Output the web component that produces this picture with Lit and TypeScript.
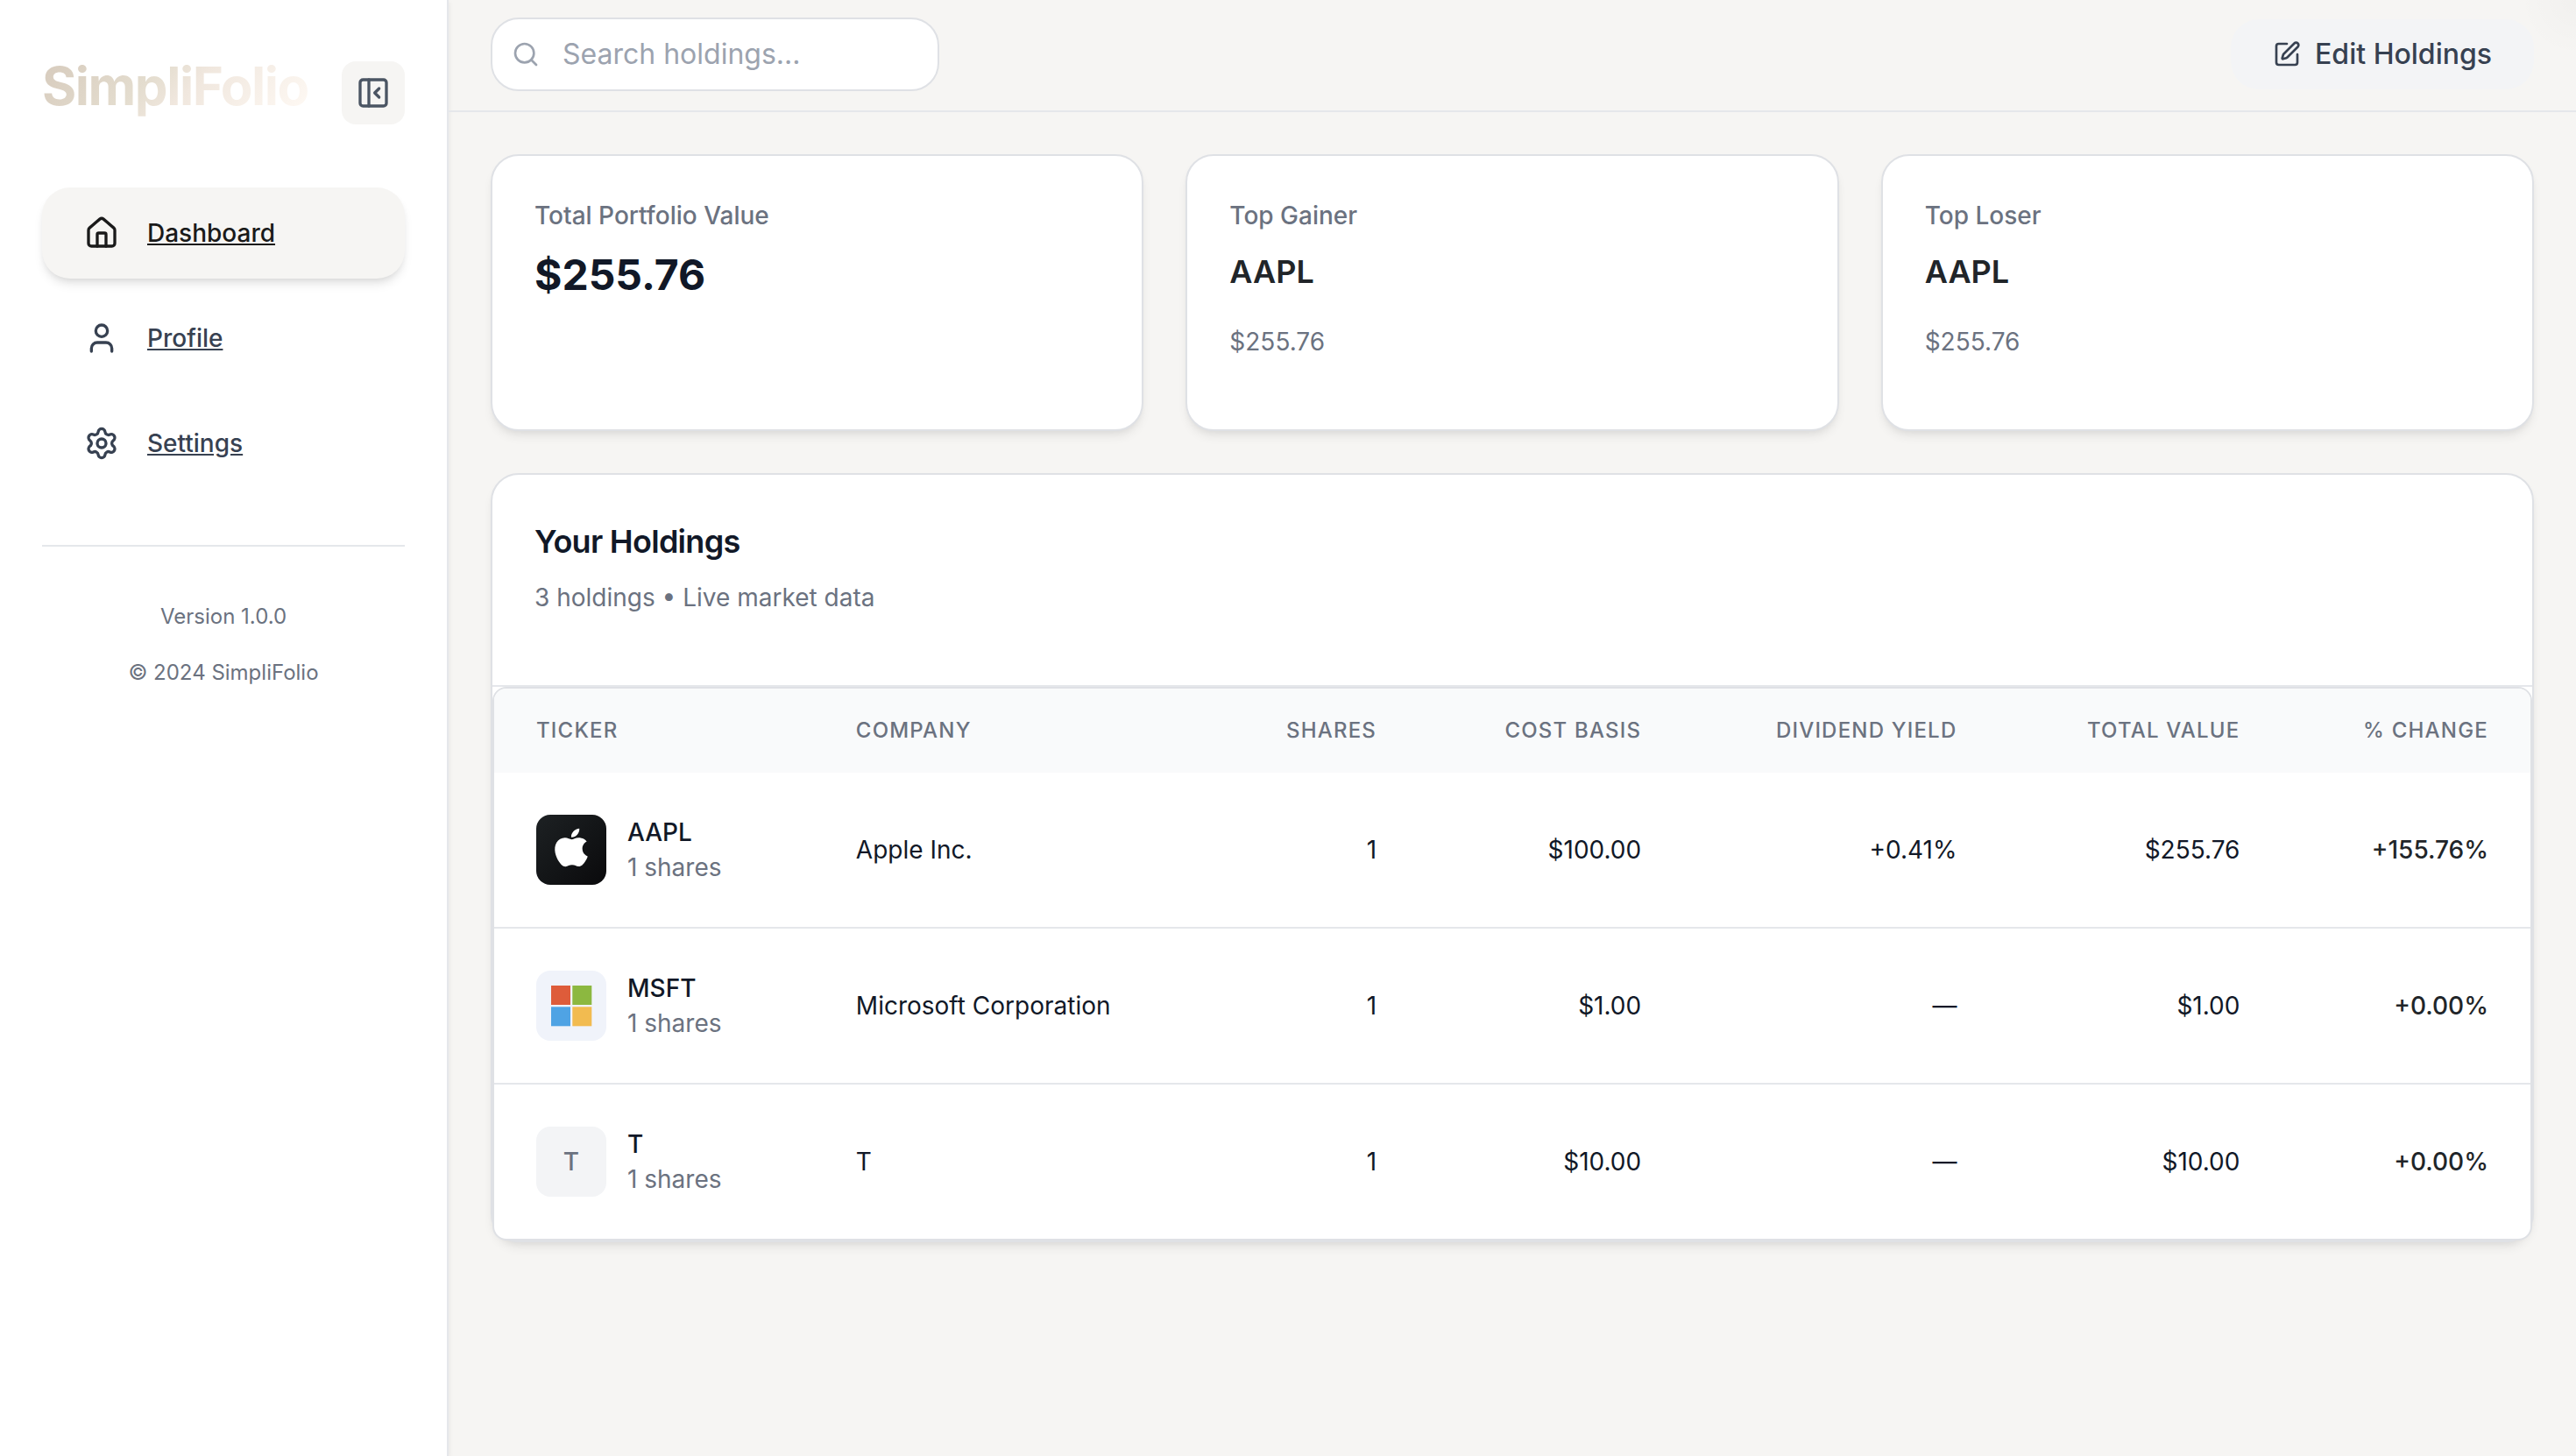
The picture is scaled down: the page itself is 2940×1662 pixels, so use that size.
import { LitElement, html, css, svg, type SVGTemplateResult } from "lit";
import { customElement, state } from "lit/decorators.js";

interface Holding {
  ticker: string;
  company: string;
  shares: number;
  cost: string;
  dividend: string;
  total: string;
  change: string;
}

const HOLDINGS: Holding[] = [
  { ticker: "AAPL", company: "Apple Inc.", shares: 1, cost: "$100.00", dividend: "+0.41%", total: "$255.76", change: "+155.76%" },
  { ticker: "MSFT", company: "Microsoft Corporation", shares: 1, cost: "$1.00", dividend: "—", total: "$1.00", change: "+0.00%" },
  { ticker: "T", company: "T", shares: 1, cost: "$10.00", dividend: "—", total: "$10.00", change: "+0.00%" },
];

const ICONS: Record<string, SVGTemplateResult> = {
  house: svg`<path d="M15 21v-8a1 1 0 0 0-1-1h-4a1 1 0 0 0-1 1v8"/><path d="M3 10a2 2 0 0 1 .709-1.528l7-5.999a2 2 0 0 1 2.582 0l7 5.999A2 2 0 0 1 21 10v9a2 2 0 0 1-2 2H5a2 2 0 0 1-2-2z"/>`,
  user: svg`<path d="M19 21v-2a4 4 0 0 0-4-4H9a4 4 0 0 0-4 4v2"/><circle cx="12" cy="7" r="4"/>`,
  gear: svg`<path d="M9.671 4.136a2.34 2.34 0 0 1 4.659 0 2.34 2.34 0 0 0 3.319 1.915 2.34 2.34 0 0 1 2.33 4.033 2.34 2.34 0 0 0 0 3.831 2.34 2.34 0 0 1-2.33 4.033 2.34 2.34 0 0 0-3.319 1.915 2.34 2.34 0 0 1-4.659 0 2.34 2.34 0 0 0-3.32-1.915 2.34 2.34 0 0 1-2.33-4.033 2.34 2.34 0 0 0 0-3.831A2.34 2.34 0 0 1 6.35 6.051a2.34 2.34 0 0 0 3.319-1.915"/><circle cx="12" cy="12" r="3"/>`,
  panel: svg`<rect width="18" height="18" x="3" y="3" rx="2"/><path d="M9 3v18"/><path d="m16 15-3-3 3-3"/>`,
  search: svg`<circle cx="11" cy="11" r="8"/><path d="m21 21-4.3-4.3"/>`,
  pen: svg`<path d="M12 3H5a2 2 0 0 0-2 2v14a2 2 0 0 0 2 2h14a2 2 0 0 0 2-2v-7"/><path d="M18.375 2.625a1 1 0 0 1 3 3l-9.013 9.014a2 2 0 0 1-.853.505l-2.873.84a.5.5 0 0 1-.62-.62l.84-2.873a2 2 0 0 1 .506-.852z"/>`,
};

const icon = (name: string, size = "") => html`
  <svg class="icon ${size}" viewBox="0 0 24 24" aria-hidden="true">${ICONS[name]}</svg>
`;

const appleTile = html`
  <svg class="tile" viewBox="0 0 80 80" aria-hidden="true">
    <defs>
      <linearGradient id="apple-bg" x1="0" y1="0" x2="1" y2="1">
        <stop offset="0" stop-color="#1d2123" />
        <stop offset="1" stop-color="#0a0a0c" />
      </linearGradient>
    </defs>
    <rect width="80" height="80" fill="url(#apple-bg)" />
    <g transform="translate(17 15.7) scale(1.92 1.81)" fill="#fff">
      <path d="M12.152 6.896c-.948 0-2.415-1.078-3.96-1.04-2.04.027-3.91 1.183-4.961 3.014-2.117 3.675-.546 9.103 1.519 12.09 1.013 1.454 2.208 3.09 3.792 3.039 1.52-.065 2.09-.987 3.935-.987 1.831 0 2.35.987 3.96.948 1.637-.026 2.676-1.48 3.676-2.948 1.156-1.688 1.636-3.325 1.662-3.415-.039-.013-3.182-1.221-3.22-4.857-.026-3.04 2.48-4.494 2.597-4.559-1.429-2.09-3.623-2.324-4.39-2.376-2-.156-3.675 1.09-4.61 1.09zM15.53 3.83c.843-1.012 1.4-2.427 1.245-3.83-1.207.052-2.662.805-3.532 1.818-.78.896-1.454 2.338-1.273 3.714 1.338.104 2.715-.688 3.559-1.701" />
    </g>
  </svg>
`;

const microsoftTile = html`
  <svg class="tile" viewBox="0 0 80 80" aria-hidden="true">
    <rect width="80" height="80" fill="#f0f3fa" />
    <rect x="17" y="17" width="22" height="22" fill="#de5c3a" />
    <rect x="41.3" y="17" width="22" height="22" fill="#8cb840" />
    <rect x="17" y="41.3" width="22" height="22" fill="#4fa3e4" />
    <rect x="41.3" y="41.3" width="22" height="22" fill="#f2bb50" />
  </svg>
`;

const tileFor = (ticker: string) =>
  ticker === "AAPL" ? appleTile
  : ticker === "MSFT" ? microsoftTile
  : html`<span class="tile letter" aria-hidden="true">${ticker[0]}</span>`;

@customElement("app-root")
export class AppRoot extends LitElement {
  @state() private query = "";

  static styles = css`
    :host {
      display: block;
      font-family: Inter, "Liberation Sans", sans-serif;
      font-size: 28px;
      line-height: 40px;
      color: #111827;
    }
    *, *::before, *::after { box-sizing: border-box; }
    h1, h2, h3, p { margin: 0; font: inherit; }
    button, input { font: inherit; color: inherit; }

    .shell {
      display: grid;
      grid-template-columns: 512px minmax(0, 1fr);
      min-height: 100vh;
      background: #f6f5f3;
    }
    .icon {
      flex: none;
      width: 40px;
      height: 40px;
      fill: none;
      stroke: currentColor;
      stroke-width: 2;
      stroke-linecap: round;
      stroke-linejoin: round;
    }
    .icon.small { width: 32px; height: 32px; }

    .sidebar {
      padding: 62px 48px;
      background: #fff;
      border-right: 2px solid #e5e7eb;
      box-shadow: 0 2px 6px rgba(0, 0, 0, 0.08);
    }
    .brand {
      display: flex;
      align-items: center;
      justify-content: space-between;
      margin-bottom: 64px;
    }
    .logo {
      margin-bottom: 16px;
      font-size: 60px;
      line-height: 72px;
      font-weight: 700;
      letter-spacing: -0.025em;
      color: transparent;
      background: linear-gradient(135deg, #d6cabc 0%, #e4ddcf 40%, #f0e7de 55%, #fffaf5 100%);
      -webkit-background-clip: text;
      background-clip: text;
    }
    .collapse {
      display: grid;
      place-items: center;
      width: 72px;
      height: 72px;
      padding: 0;
      border: 0;
      border-radius: 16px;
      background: #f6f5f3;
      color: #4b5563;
    }
    .nav {
      display: flex;
      flex-direction: column;
      gap: 16px;
      padding-bottom: 64px;
      border-bottom: 2px solid #e5e7eb;
    }
    .nav-link {
      display: flex;
      align-items: center;
      gap: 32px;
      padding: 32px 48px;
      border-radius: 32px;
      font-weight: 500;
      color: #374151;
      text-decoration: underline;
    }
    .nav-link.active {
      color: #1a1a1a;
      background: #f6f5f3;
      box-shadow: 0 8px 12px -2px rgba(0, 0, 0, 0.1), 0 4px 8px -4px rgba(0, 0, 0, 0.1);
    }
    .about {
      display: flex;
      flex-direction: column;
      gap: 32px;
      padding-top: 64px;
      font-size: 24px;
      line-height: 32px;
      text-align: center;
      color: #6b7280;
    }

    .topbar {
      display: flex;
      align-items: center;
      justify-content: space-between;
      padding: 20px 48px 22px;
      border-bottom: 2px solid #e5e7eb;
      background: radial-gradient(circle 64px at 100% 0, rgba(0, 0, 0, 0.02), transparent);
      font-size: 32px;
    }
    .search {
      display: flex;
      align-items: center;
      gap: 26px;
      width: 512px;
      height: 84px;
      padding: 0 22px;
      border: 2px solid #dfe1e5;
      border-radius: 32px;
      background: #fff;
      color: #9ca3af;
    }
    .search input {
      flex: 1;
      min-width: 0;
      padding: 0;
      border: 0;
      outline: 0;
      background: none;
      color: #111827;
    }
    .search input::placeholder { color: #9ca3af; opacity: 1; }
    .edit {
      display: flex;
      align-items: center;
      gap: 16px;
      height: 80px;
      padding: 0 48px;
      border: 0;
      border-radius: 32px;
      background: #f3f4f6;
      color: #374151;
      font-weight: 500;
    }

    .content {
      display: flex;
      flex-direction: column;
      gap: 48px;
      padding: 48px;
    }
    .cards {
      display: grid;
      grid-template-columns: repeat(3, minmax(0, 1fr));
      gap: 48px;
    }
    .card {
      background: #fff;
      border: 2px solid #dfe1e5;
      border-radius: 32px;
      box-shadow: 0 8px 12px -2px rgba(0, 0, 0, 0.07), 0 4px 8px -4px rgba(0, 0, 0, 0.07);
    }
    .stat { padding: 48px 48px 80px; }
    .stat-label {
      margin-bottom: 16px;
      font-weight: 500;
      color: #6b7280;
    }
    .stat-value {
      font-size: 48px;
      line-height: 64px;
      font-weight: 700;
    }
    .stat-name {
      margin-bottom: 32px;
      font-size: 36px;
      line-height: 56px;
      font-weight: 600;
      color: #212529;
    }
    .muted { color: #6b7280; }

    .holdings-head {
      padding: 48px 48px 80px;
      border-bottom: 2px solid #e5e7eb;
    }
    .holdings-title {
      margin-bottom: 16px;
      font-size: 36px;
      line-height: 56px;
      font-weight: 600;
      letter-spacing: -0.02em;
    }
    .table-wrap {
      overflow: hidden;
      border: 2px solid #dfe1e5;
      border-radius: 16px;
      background: #fff;
    }
    table {
      width: 100%;
      table-layout: fixed;
      border-collapse: separate;
      border-spacing: 0;
    }
    .col-ticker { width: 15.7%; }
    .col-company { width: 19.5%; }
    .col-shares { width: 10.2%; }
    .col-cost { width: 13%; }
    .col-dividend { width: 15.5%; }
    .col-total { width: 13.9%; }
    .col-change { width: 12.2%; }
    th, td {
      padding: 48px;
      text-align: left;
      white-space: nowrap;
    }
    th {
      padding: 32px 48px;
      background: #f9fafb;
      font-size: 24px;
      line-height: 32px;
      font-weight: 500;
      letter-spacing: 0.05em;
      text-transform: uppercase;
      color: #6b7280;
    }
    .num { text-align: right; }
    tbody tr + tr td { border-top: 2px solid #e5e7eb; }
    .security {
      display: flex;
      align-items: center;
      gap: 24px;
    }
    .symbol { font-weight: 500; }
    .change { font-weight: 500; color: #212529; }
    .tile {
      flex: none;
      width: 80px;
      height: 80px;
      border-radius: 16px;
      overflow: hidden;
    }
    .letter {
      display: grid;
      place-items: center;
      background: #f3f4f6;
      font-weight: 500;
      color: #6b7280;
    }
  `;

  private onSearch(e: Event) {
    this.query = (e.target as HTMLInputElement).value;
  }

  private get visible() {
    const q = this.query.trim().toLowerCase();
    return HOLDINGS.filter((h) => `${h.ticker} ${h.company}`.toLowerCase().includes(q));
  }

  render() {
    return html`
      <div class="shell">
        <aside class="sidebar">
          <div class="brand">
            <h1 class="logo">SimpliFolio</h1>
            <button class="collapse" type="button" aria-label="Collapse sidebar">${icon("panel")}</button>
          </div>
          <nav class="nav">
            <a class="nav-link active" href="#dashboard">${icon("house")}<span>Dashboard</span></a>
            <a class="nav-link" href="#profile">${icon("user")}<span>Profile</span></a>
            <a class="nav-link" href="#settings">${icon("gear")}<span>Settings</span></a>
          </nav>
          <div class="about">
            <p>Version 1.0.0</p>
            <p>© 2024 SimpliFolio</p>
          </div>
        </aside>

        <div class="main">
          <header class="topbar">
            <label class="search">
              ${icon("search", "small")}
              <input type="text" placeholder="Search holdings..." aria-label="Search holdings" .value=${this.query} @input=${this.onSearch} />
            </label>
            <button class="edit" type="button">${icon("pen", "small")}<span>Edit Holdings</span></button>
          </header>

          <main class="content">
            <section class="cards">
              <article class="card stat">
                <h3 class="stat-label">Total Portfolio Value</h3>
                <p class="stat-value">$255.76</p>
              </article>
              <article class="card stat">
                <h3 class="stat-label">Top Gainer</h3>
                <p class="stat-name">AAPL</p>
                <p class="muted">$255.76</p>
              </article>
              <article class="card stat">
                <h3 class="stat-label">Top Loser</h3>
                <p class="stat-name">AAPL</p>
                <p class="muted">$255.76</p>
              </article>
            </section>

            <section class="card">
              <div class="holdings-head">
                <h2 class="holdings-title">Your Holdings</h2>
                <p class="muted">${HOLDINGS.length} holdings • Live market data</p>
              </div>
              <div class="table-wrap">
                <table>
                  <colgroup>
                    <col class="col-ticker" />
                    <col class="col-company" />
                    <col class="col-shares" />
                    <col class="col-cost" />
                    <col class="col-dividend" />
                    <col class="col-total" />
                    <col class="col-change" />
                  </colgroup>
                  <thead>
                    <tr>
                      <th scope="col">Ticker</th>
                      <th scope="col">Company</th>
                      <th scope="col" class="num">Shares</th>
                      <th scope="col" class="num">Cost Basis</th>
                      <th scope="col" class="num">Dividend Yield</th>
                      <th scope="col" class="num">Total Value</th>
                      <th scope="col" class="num">% Change</th>
                    </tr>
                  </thead>
                  <tbody>
                    ${this.visible.map((h) => html`
                      <tr>
                        <td>
                          <div class="security">
                            ${tileFor(h.ticker)}
                            <div>
                              <div class="symbol">${h.ticker}</div>
                              <div class="muted">${h.shares} shares</div>
                            </div>
                          </div>
                        </td>
                        <td>${h.company}</td>
                        <td class="num">${h.shares}</td>
                        <td class="num">${h.cost}</td>
                        <td class="num">${h.dividend}</td>
                        <td class="num">${h.total}</td>
                        <td class="num change">${h.change}</td>
                      </tr>
                    `)}
                  </tbody>
                </table>
              </div>
            </section>
          </main>
        </div>
      </div>
    `;
  }
}
